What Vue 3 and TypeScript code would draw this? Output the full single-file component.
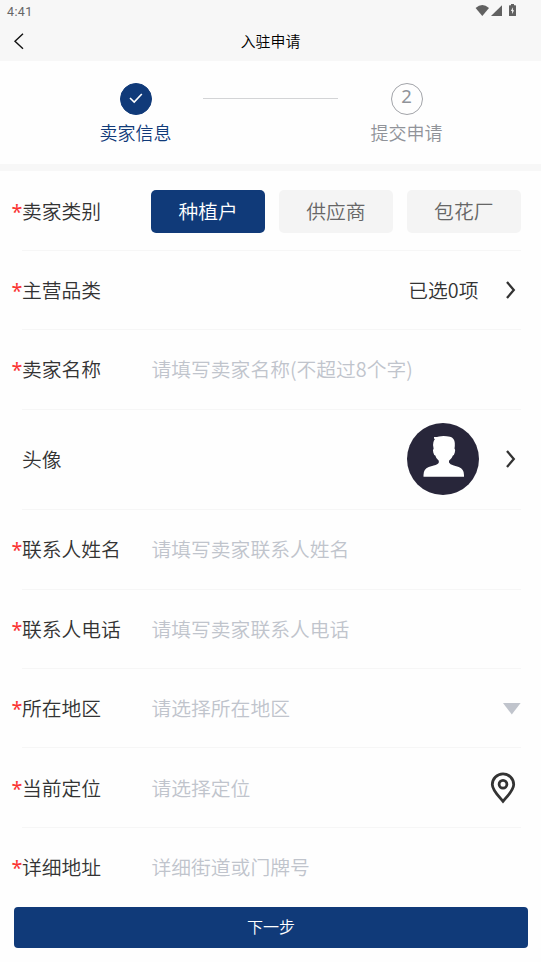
<script setup lang="ts">
import { ref } from 'vue'

interface Field {
  label: string
  kind: 'category' | 'link' | 'input' | 'avatar' | 'select' | 'location'
  text?: string
  required: boolean
}

const categories: string[] = ['种植户', '供应商', '包花厂']
const selected = ref<string>('种植户')

const fields: Field[] = [
  { label: '卖家类别', kind: 'category', required: true },
  { label: '主营品类', kind: 'link', text: '已选0项', required: true },
  { label: '卖家名称', kind: 'input', text: '请填写卖家名称(不超过8个字)', required: true },
  { label: '头像', kind: 'avatar', required: false },
  { label: '联系人姓名', kind: 'input', text: '请填写卖家联系人姓名', required: true },
  { label: '联系人电话', kind: 'input', text: '请填写卖家联系人电话', required: true },
  { label: '所在地区', kind: 'select', text: '请选择所在地区', required: true },
  { label: '当前定位', kind: 'location', text: '请选择定位', required: true },
  { label: '详细地址', kind: 'input', text: '详细街道或门牌号', required: true },
]
</script>

<template>
  <div class="page">
    <header class="top">
      <div class="status">
        <span class="clock">4:41</span>
        <svg class="signals" width="44" height="16" viewBox="0 0 44 16">
          <path d="M.6 7Q7.300 1.200 14 7L7.300 15Z" />
          <path d="M27 4.200V15H16Z" />
          <path fill-rule="evenodd" d="M34.600 4.200h1.400V3h3v1.200h1.400q.6 0 .6.6V14.400q0 .6-.6.6h-5.800q-.6 0-.6-.6V4.800q0-.6.6-.6ZM37.900 6.200l-2 3.800h1.200v3l2-3.800h-1.200Z" />
        </svg>
      </div>
      <nav class="nav">
        <svg class="back" width="12" height="18" viewBox="0 0 12 18"><path d="M10 1.800L2 9.300l8 7.500" /></svg>
        <h1 class="title">入驻申请</h1>
      </nav>
    </header>

    <section class="steps">
      <div class="step done">
        <span class="badge">
          <svg width="16" height="14" viewBox="0 0 16 14"><path d="M2 6L6.200 10L13.800 2" /></svg>
        </span>
        <span class="step-name">卖家信息</span>
      </div>
      <i class="connector"></i>
      <div class="step">
        <span class="badge"><span class="number">2</span></span>
        <span class="step-name">提交申请</span>
      </div>
    </section>

    <main class="form">
      <div v-for="field in fields" :key="field.label" class="row" :class="field.kind">
        <span class="star">{{ field.required ? '*' : '' }}</span>
        <div class="body">
          <span class="label">{{ field.label }}</span>
          <div v-if="field.kind === 'category'" class="options">
            <button
              v-for="item in categories"
              :key="item"
              class="option"
              :class="{ active: item === selected }"
              @click="selected = item"
            >{{ item }}</button>
          </div>
          <span v-else-if="field.kind === 'link'" class="value">{{ field.text }}</span>
          <svg v-else-if="field.kind === 'avatar'" class="photo" width="72" height="72" viewBox="0 0 72 72">
            <circle cx="36" cy="36" r="36" fill="#28263a" />
            <path fill="#fff" d="M27 14q2.500.2 5-.6q5-1.200 11 .4q4.500 1.200 4.800 6.200q.2 3-.3 5.500q1.200 1 .3 4q-.5 2.500-1.900 3q-.9 3.200-3.900 5.200v1.800q.8 2 4.800 3l5 1.500q5.200 1.800 5.200 8v1.800H16.500v-1.800q0-6.200 5.200-8l5-1.500q4.300-1 5.100-3v-1.800q-2.800-2-3.500-5.200q-1.500-.5-2-3q-.8-2.700.3-4q-1-4-.2-6.300q.5-2 1.400-2.700q-1-1-.8-2.500Z" />
          </svg>
          <span v-else class="placeholder">{{ field.text }}</span>

          <svg v-if="field.kind === 'link' || field.kind === 'avatar'" class="chevron" width="12" height="20" viewBox="0 0 12 20">
            <path d="M2 2L8.800 10L2 18" />
          </svg>
          <svg v-if="field.kind === 'select'" class="caret" width="18" height="12" viewBox="0 0 18 12"><path d="M0 0H17.600L8.800 11.600Z" /></svg>
          <svg v-if="field.kind === 'location'" class="pin" width="26" height="32" viewBox="0 0 26 32">
            <path d="M13 29.300C9.500 25 2.300 18.500 2.300 12.500a10.700 10.700 0 0 1 21.400 0C23.700 18.500 16.500 25 13 29.300Z" />
            <circle cx="13" cy="12.300" r="3.900" />
          </svg>
        </div>
      </div>
    </main>

    <footer class="footer"><button class="next">下一步</button></footer>
  </div>
</template>

<style>
body {
  margin: 0;
  background: #fff;
}
</style>

<style scoped>
.page {
  display: flex;
  flex-direction: column;
  box-sizing: border-box;
  height: 962px;
  overflow: hidden;
  background: #fefefe;
  color: #333;
  font-family: "Noto Sans CJK SC", sans-serif;
  font-size: 19.8px;
  font-weight: 350;
}
button {
  border: 0;
  padding: 0;
  font: inherit;
}
svg {
  display: block;
  flex: none;
}
.top {
  flex: none;
  height: 61px;
  background: #f7f7f7;
}
.status {
  display: flex;
  justify-content: space-between;
  height: 22px;
  padding: 0 22px 0 7px;
}
.clock {
  font: 400 12.5px/23px Roboto, sans-serif;
  letter-spacing: 0.4px;
  color: #666;
}
.signals {
  margin-top: 1px;
  fill: #616161;
}
.nav {
  display: grid;
  grid-template-columns: 40px 1fr 40px;
  align-items: center;
  height: 38px;
}
.back {
  margin-left: 13px;
  fill: none;
  stroke: #111;
  stroke-width: 1.4;
}
.title {
  margin: 0;
  text-align: center;
  font-size: 14.9px;
  font-weight: 350;
  line-height: 22px;
  color: #000;
}
.steps {
  flex: none;
  display: grid;
  grid-template-columns: 203px 135px 203px;
  height: 103px;
  border-bottom: 7px solid #f7f7f7;
}
.step {
  display: flex;
  flex-direction: column;
  align-items: center;
  padding: 22px 66px 0 0;
  color: #909399;
}
.step.done {
  padding: 22px 0 0 68px;
  color: #103a79;
}
.badge {
  display: flex;
  align-items: center;
  justify-content: center;
  box-sizing: border-box;
  width: 32px;
  height: 32px;
  border: 1px solid #a2a4a9;
  border-radius: 50%;
}
.done .badge {
  border-color: #103a79;
  background: #103a79;
}
.badge path {
  fill: none;
  stroke: #fff;
  stroke-width: 1.6;
}
.number {
  height: 27px;
  line-height: 20px;
  font-family: "Noto Sans", sans-serif;
  font-size: 18.5px;
  font-weight: 400;
}
.step-name {
  margin-top: 4px;
  font-size: 18px;
  line-height: 26px;
}
.connector {
  height: 1px;
  margin-top: 37px;
  background: #d3d4d6;
}
.form {
  flex: none;
  padding: 0.5px 20.5px 0 12px;
}
.row {
  display: grid;
  grid-template-columns: 9.9px 1fr;
  height: 79.4px;
}
.row.avatar {
  height: 100.6px;
}
.star {
  align-self: center;
  padding-top: 1px;
  margin-left: -0.5px;
  font-family: "Noto Sans", sans-serif;
  font-weight: 400;
  line-height: 26px;
  color: #fa3534;
}
.body {
  display: flex;
  align-items: center;
  box-sizing: border-box;
  border-bottom: 1px solid #f6f6f6;
}
.row:last-child .body {
  border-color: transparent;
}
.label {
  flex: none;
  width: 129.6px;
  line-height: 30px;
}
.options {
  display: grid;
  grid-template-columns: repeat(3, 1fr);
  gap: 14.4px;
  flex: 1;
  margin-top: 1px;
}
.option {
  height: 43px;
  padding-bottom: 2px;
  border-radius: 5px;
  background: #f4f4f4;
  color: #666;
}
.option.active {
  background: #103a79;
  color: #fff;
}
.value,
.photo {
  margin-left: auto;
}
.value,
.placeholder {
  line-height: 30px;
}
.placeholder {
  flex: 1;
  color: #c0c4cc;
}
.chevron {
  margin: 0 4px 0 26px;
  fill: none;
  stroke: #333;
  stroke-width: 2.3;
}
.caret {
  margin-top: 2px;
  fill: #c0c4cc;
}
.pin {
  margin-right: 5px;
  fill: none;
  stroke: #333;
  stroke-width: 2.8;
}
.footer {
  flex: none;
  margin-top: -0.7px;
  padding: 0 13px 14px 14px;
  background: #fefefe;
}
.next {
  display: block;
  width: 100%;
  height: 41px;
  padding-bottom: 2px;
  border-radius: 4px;
  background: #103a79;
  color: #fff;
  font-size: 16px;
}
</style>
